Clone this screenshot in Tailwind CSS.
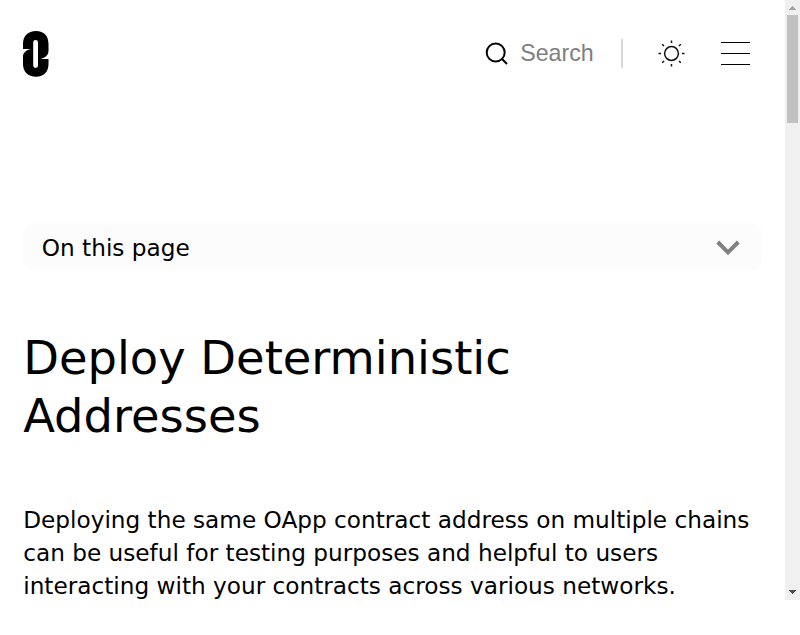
<!DOCTYPE html>
<html lang="en">
<head>
<meta charset="utf-8">
<title>Deploy Deterministic Addresses</title>
<script src="https://cdn.jsdelivr.net/npm/@tailwindcss/browser@4"></script>
</head>
<body class="bg-white text-black overflow-hidden font-['DejaVu_Sans',sans-serif]">
<div class="flex h-[600px] w-[800px] overflow-hidden">
  <div class="w-[785px] pl-[23.200px] pr-[22.800px]">
    <header class="-ml-[0.200px] flex h-[107px] items-center pr-3">
      <svg class="w-[26px] h-[46px]" viewBox="0 0 26 46" aria-label="Home">
        <path d="M0 18V13C0 5 5 0 13 0S25.500 5 25.500 13V20C25.500 24.500 21.500 27.300 17 28H25.500V33C25.500 41 21 45.700 13 45.700S0 41 0 33V25.500C0 21.500 4 18.500 8.500 18Z"/>
        <rect x="10.200" y="9" width="4.800" height="28" rx="2.400" fill="#fff"/>
      </svg>
      <div class="ml-auto flex items-center">
        <svg class="w-6 h-6" viewBox="0 0 24 24" fill="none" stroke="#000" stroke-width="2"><circle cx="10.700" cy="10.500" r="9"/><path d="M17 17L22 22"/></svg>
        <span class="ml-[11px] w-[74px] whitespace-nowrap pb-0.5 text-[23.200px] leading-7 text-[#808080] font-['Liberation_Sans',sans-serif]">Search</span>
        <div class="ml-[27px] h-[29px] w-[2px] bg-[#d8d8d8]"></div>
        <svg class="ml-[35px] w-[27px] h-[27px]" viewBox="0 0 27 27" fill="none" stroke="#111" stroke-width="1.500"><circle cx="13.500" cy="13.500" r="6.900"/><path d="M13.500 .5V3M13.500 24V26.500M.5 13.500H3M24 13.500H26.500M4.200 4.200L6 6M21 21L22.800 22.800M4.200 22.800L6 21M21 6L22.800 4.200"/></svg>
        <div class="ml-9 flex h-[23px] w-[29px] flex-col justify-between">
          <div class="h-px bg-black"></div><div class="h-px bg-black"></div><div class="h-px bg-black"></div>
        </div>
      </div>
    </header>
    <main>
      <button class="mt-[116px] flex h-[47px] w-[739px] items-center justify-between rounded-[9px] bg-[#fcfcfc] pl-[18.600px] pr-[22px] text-[23.200px] leading-[33px]">
        <span class="pt-px">On this page</span>
        <svg class="mt-0.5 w-6 h-[15px]" viewBox="0 0 24 15" fill="none" stroke="#808080" stroke-width="4"><path d="M1.700 2L12 12.300L22.300 2"/></svg>
      </button>
      <h1 class="mt-[59px] whitespace-nowrap text-[46.400px] leading-[58px]">Deploy Deterministic<br>Addresses</h1>
      <p class="mt-[58px] whitespace-nowrap text-[23.200px] leading-[33px]">Deploying the same OApp contract address on multiple chains<br>can be useful for testing purposes and helpful to users<br>interacting with your contracts across various networks.</p>
    </main>
  </div>
  <div class="flex h-[600px] w-[15px] flex-col items-center bg-[#f0f0f0]">
    <svg class="h-[15px] w-[15px]" viewBox="0 0 15 15" shape-rendering="crispEdges"><path fill="#a3a3a3" d="M7 6h1v1h1v1h1v1h1v1H4V9h1V8h1V7h1z"/></svg>
    <div class="h-[108px] w-[11px] bg-[#c1c1c1]"></div>
    <svg class="mt-auto h-[15px] w-[15px]" viewBox="0 0 15 15" shape-rendering="crispEdges"><path fill="#505050" d="M4 5h7v1h-1v1H9v1H8v1H7V8H6V7H5V6H4z"/></svg>
  </div>
</div>
</body>
</html>
